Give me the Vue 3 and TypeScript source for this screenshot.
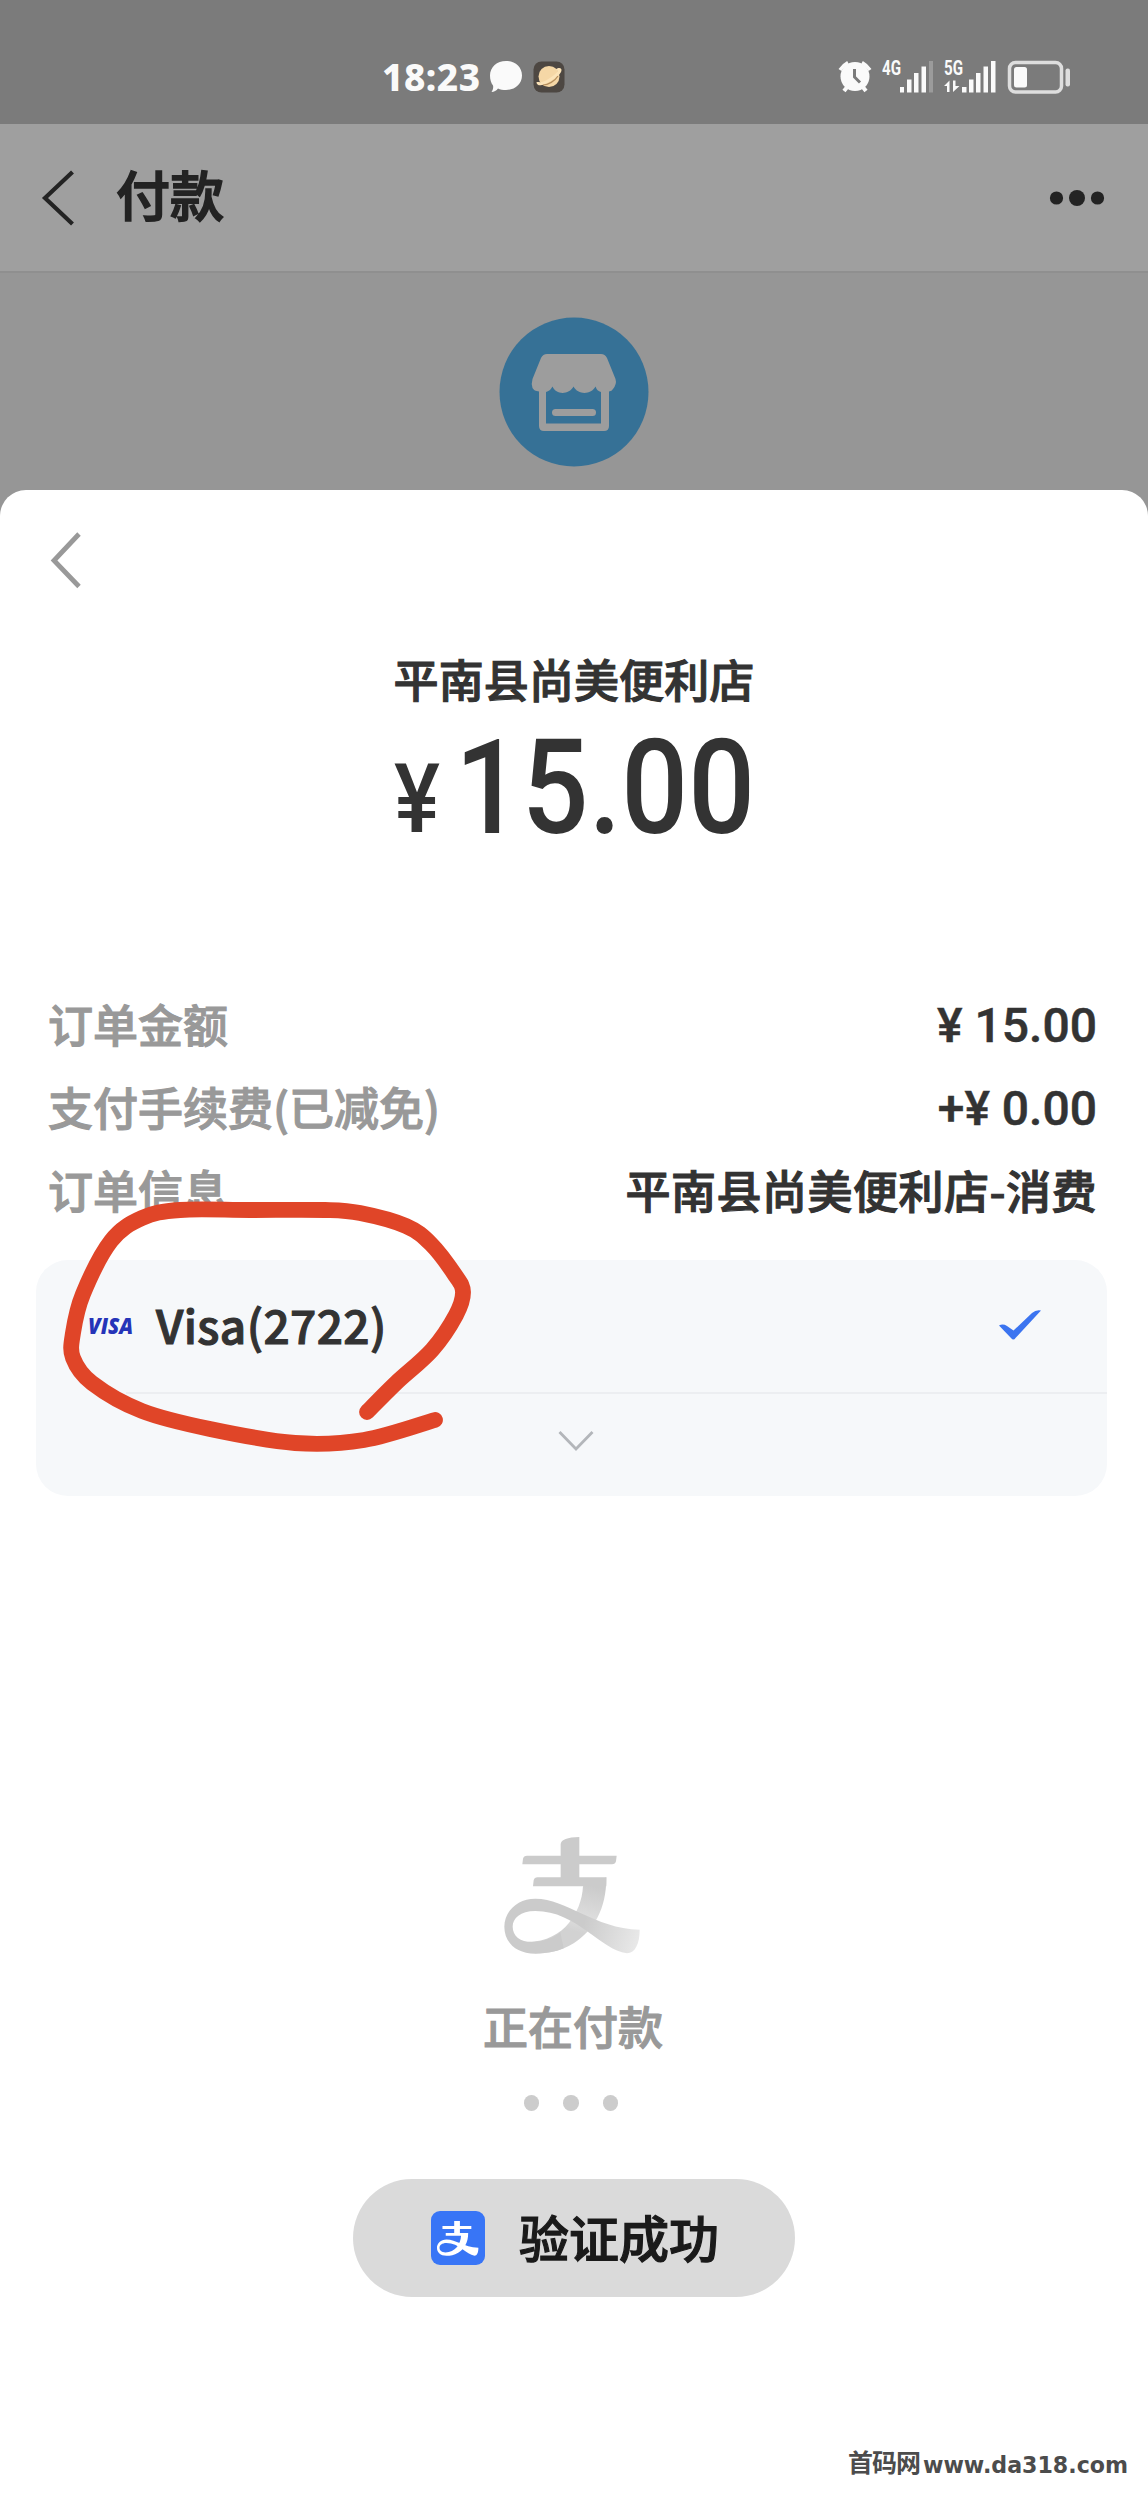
<script setup lang="ts">
interface DetailRow {
  label: string
  value: string
  numeric: boolean
}

const rows: DetailRow[] = [
  { label: '订单金额', value: '¥ 15.00', numeric: true },
  { label: '支付手续费(已减免)', value: '+¥ 0.00', numeric: true },
  { label: '订单信息', value: '平南县尚美便利店-消费', numeric: false },
]

type Point = [number, number]

// Hand-drawn marker around the selected card.
const markerPoints: Point[] = [
  [435, 1420], [364, 1440], [295, 1443], [210, 1429], [142, 1411], [92, 1383],
  [73, 1358], [73, 1333], [83, 1294], [111, 1241], [142, 1218], [180, 1210],
  [250, 1210], [325, 1210], [360, 1213], [406, 1226], [431, 1244], [455, 1275],
  [463, 1292], [456, 1315], [432, 1350], [396, 1383], [367, 1412],
]

// Catmull-Rom interpolation turned into cubic segments.
function smooth(points: Point[]): string {
  let d = `M${points[0][0]} ${points[0][1]}`
  for (let i = 0; i < points.length - 1; i++) {
    const a = points[Math.max(i - 1, 0)]
    const b = points[i]
    const c = points[i + 1]
    const e = points[Math.min(i + 2, points.length - 1)]
    d += `C${b[0] + (c[0] - a[0]) / 6} ${b[1] + (c[1] - a[1]) / 6} ${c[0] - (e[0] - b[0]) / 6} ${c[1] - (e[1] - b[1]) / 6} ${c[0]} ${c[1]}`
  }
  return d
}

const markerPath = smooth(markerPoints)
</script>

<template>
  <div class="screen">
    <header class="status">
      <div class="status-left">
        <span class="clock">18:23</span>
        <svg class="bubble" width="34" height="34" viewBox="0 0 34 34">
          <path d="M17 1C26 1 33 7 33 15.500S26 30 17 30C14 30 11 29.500 9 28.500C7.500 30.500 5 32 2.500 32C4 30 4.500 27.500 4 25.500C2 23 1 19.500 1 15.500C1 7 8 1 17 1Z" fill="#fafafa" />
        </svg>
        <svg width="32" height="32" viewBox="0 0 32 32">
          <rect x=".5" y=".5" width="31" height="31" rx="8" fill="#4d4742" />
          <circle cx="16" cy="15.500" r="10.500" fill="#f5d7a6" />
          <path d="M5 21C5 24 9 23 14 20.500C21 17 27.500 11 27 9C26.500 8 25 8.500 24 9.500" fill="none" stroke="#fbe3b8" stroke-width="3" />
          <path d="M10 24C15 24 22 20 25 15" fill="none" stroke="#b58d5c" stroke-width="1.200" />
        </svg>
      </div>
      <svg class="status-right" width="252" height="36" viewBox="838 60 252 36" fill="#fafafa">
        <path d="M840 71A22 22 0 0 1 848 63.500M870 71A22 22 0 0 0 862 63.500" fill="none" stroke="#fafafa" stroke-width="3.500" />
        <path d="M844 92L848 87M866 92L862 87" stroke="#fafafa" stroke-width="4" />
        <circle cx="855" cy="77.500" r="14.500" />
        <path d="M854.500 70V78L860 83.500" fill="none" stroke="#7b7b7b" stroke-width="3" />
        <text x="882" y="76" textLength="19" lengthAdjust="spacingAndGlyphs" class="net">4G</text>
        <path d="M900 88h4v5.500h-4zM907 80.500h4.500v13H907zM914 74h4.500v19.500H914zM921.500 67.500h4.500v26h-4.500z" />
        <path d="M929 62h4v31.500h-4z" opacity=".25" />
        <text x="944" y="76" textLength="19" lengthAdjust="spacingAndGlyphs" class="net">5G</text>
        <path d="M944 87L949.500 81.500V93H947V87zM953 81.500H955.500V87H959.500L953 93z" />
        <path d="M962 88h4.500v5.500H962zM969 80.500h4.500v13H969zM976 74h4.500v19.500H976zM983.500 67.500h4.500v26h-4.500zM991 62h4.500v31.500H991z" />
        <rect x="1009.500" y="63.500" width="52" height="29.500" rx="6" fill="none" stroke="#dedede" stroke-width="3.500" />
        <rect x="1014" y="68" width="13" height="20.500" rx="2.500" />
        <rect x="1065.500" y="69.500" width="4.500" height="18" rx="2" fill="#dedede" />
      </svg>
    </header>

    <nav class="nav">
      <svg width="34" height="56" viewBox="0 0 34 56">
        <path d="M31.500 2L4 28L31.500 54" fill="none" stroke="#232323" stroke-width="4.200" />
      </svg>
      <h1 class="nav-title">付款</h1>
      <svg class="more" width="56" height="18" viewBox="0 0 56 18" fill="#232323">
        <circle cx="7.500" cy="9" r="6.600" />
        <circle cx="28" cy="9" r="8" />
        <circle cx="48.500" cy="9" r="6.600" />
      </svg>
    </nav>

    <div class="backdrop">
      <svg width="150" height="150" viewBox="0 0 150 150">
        <circle cx="75" cy="75" r="74.500" fill="#367196" />
        <path fill="#9d9d9d" d="M48 37H102Q106 37 108 41L116.500 62Q118 67 114 72Q113 74 110 74.500V109Q110 114 105 114H45Q40 114 40 109V74.500Q35 74 33.500 71Q32 67 33.500 62L42 41Q44 37 48 37Z" />
        <path fill="#367196" d="M47 75Q51 74 53.500 69.500C57 78 70 78 74.500 69.500C79 78 92 78 96.500 69.500Q98 74 102 75V106.500H47Z" />
        <rect x="53" y="92" width="44" height="7" rx="3.500" fill="#9d9d9d" />
      </svg>
    </div>

    <main class="sheet">
      <svg class="sheet-back" width="34" height="58" viewBox="0 0 34 58">
        <path d="M30 3L5 29.500L30 55.500" fill="none" stroke="#999" stroke-width="4.800" />
      </svg>

      <h2 class="merchant">平南县尚美便利店</h2>
      <svg class="amount" width="380" height="160" viewBox="384 705 380 160">
        <text x="394" y="832" textLength="46" lengthAdjust="spacingAndGlyphs" class="yen">¥</text>
        <text x="455" y="833" textLength="300" lengthAdjust="spacingAndGlyphs" class="digits">15.00</text>
      </svg>

      <dl class="details">
        <div v-for="row in rows" :key="row.label" class="row">
          <dt>{{ row.label }}</dt>
          <dd :class="{ numeric: row.numeric }">{{ row.value }}</dd>
        </div>
      </dl>

      <section class="card">
        <div class="method">
          <svg width="50" height="36" viewBox="-1 -8 50 36">
            <text x="0" y="17.500" textLength="45" lengthAdjust="spacingAndGlyphs" class="brand">VISA</text>
          </svg>
          <span class="method-name">Visa(2722)</span>
          <svg class="check" width="44" height="32" viewBox="0 0 44 32">
            <path d="M1 16.500Q5 14.500 9 17L15.500 21.500L34 4Q38 .5 43 1.500L17.500 29Q15.500 32 13 29Z" fill="#3b74f0" />
          </svg>
        </div>
        <div class="expand">
          <svg width="36" height="22" viewBox="0 0 36 22">
            <path d="M1.500 2L18 19L34.500 2" fill="none" stroke="#b3b6ba" stroke-width="2.800" />
          </svg>
        </div>
      </section>

      <section class="progress">
        <svg width="136" height="118" viewBox="131 108 408 354">
          <defs>
            <linearGradient id="tail" gradientUnits="userSpaceOnUse" x1="370" y1="370" x2="538" y2="420">
              <stop offset="0" stop-color="#cbcbcb" />
              <stop offset="1" stop-color="#e9e9e9" />
            </linearGradient>
            <linearGradient id="leg" gradientUnits="userSpaceOnUse" x1="400" y1="260" x2="370" y2="400">
              <stop offset="0" stop-color="#cbcbcb" />
              <stop offset=".7" stop-color="#dedede" />
              <stop offset="1" stop-color="#d2d2d2" />
            </linearGradient>
          </defs>
          <path fill="url(#leg)" d="M368 259L438 232C438 330 400 390 340 430C300 455 265 460 225 460L200 426C260 426 300 400 325 370C350 340 366 300 368 259Z" />
          <path fill="#cbcbcb" d="M301 232V193H186L188 176Q190 167 200 167H301V132Q303 112 357 111V167H469L467 184Q465 193 455 193H357V232H438V259H218L220 241Q222 232 232 232Z" />
          <path fill="url(#tail)" d="M225 296C320 296 400 385 538 389C538 430 525 459 500 460C420 450 350 333 225 333C180 333 157 355 157 380C157 408 180 426 215 426C245 426 280 415 300 396L310 445C285 456 255 461 225 461C165 461 132 425 132 380C132 335 170 296 225 296Z" />
        </svg>
        <p class="progress-text">正在付款</p>
        <div class="dots"><i></i><i></i><i></i></div>
      </section>

      <div class="toast">
        <svg width="54" height="54" viewBox="0 0 54 54">
          <rect width="54" height="54" rx="9" fill="#3875f6" />
          <g transform="translate(-7.500 -1.200) scale(.102 .1)" fill="#fff">
            <path d="M301 232V193H186V162H301V112H357V162H469V193H357V232H438C438 330 400 390 340 430C300 455 265 460 225 460C165 460 132 425 132 380C132 335 170 296 225 296C320 296 390 370 538 380C538 430 525 459 500 460C420 450 350 333 225 333C180 333 157 355 157 380C157 408 180 426 215 426C310 426 366 340 368 259H218V232Z" />
          </g>
        </svg>
        <span>验证成功</span>
      </div>

      <svg class="watermark" width="284" height="44" viewBox="846 2440 284 44">
        <text x="848" y="2472" textLength="73" class="mark-cjk">首码网</text>
        <text x="923" y="2473" textLength="205" lengthAdjust="spacingAndGlyphs" class="mark-url">www.da318.com</text>
      </svg>
    </main>

    <svg class="marker" width="1148" height="2493" viewBox="0 0 1148 2493">
      <path :d="markerPath" />
    </svg>
  </div>
</template>

<style>
body {
  margin: 0;
  background: #fff;
}
</style>

<style scoped>
.screen {
  position: relative;
  width: 1148px;
  height: 2493px;
  overflow: hidden;
  display: flex;
  flex-direction: column;
  background: #969696;
  color: #333;
  font-family: "Noto Sans CJK SC", "Noto Sans", sans-serif;
}
.screen svg {
  display: block;
  flex: none;
  overflow: visible;
}
.status {
  height: 124px;
  box-sizing: border-box;
  padding: 30px 58px 0 382px;
  display: flex;
  align-items: center;
  justify-content: space-between;
  background: #7b7b7b;
}
.status-left {
  display: flex;
  align-items: center;
}
.clock {
  width: 98px;
  font: 800 37px/40px "Noto Sans", sans-serif;
  letter-spacing: 0.5px;
  color: #fafafa;
}
.bubble {
  margin: 0 10px 0 9px;
}
.net {
  font: 700 20px Roboto, sans-serif;
}
.nav {
  height: 149px;
  box-sizing: border-box;
  display: flex;
  align-items: center;
  padding: 0 43px 0 41px;
  background: #9f9f9f;
  border-bottom: 2px solid #8f8f8f;
}
.nav-title {
  margin: -7px 0 0 41px;
  font-size: 54px;
  line-height: 80px;
  font-weight: 500;
  color: #232323;
  -webkit-text-stroke: 1.6px #232323;
}
.more {
  margin-left: auto;
}
.backdrop {
  height: 217px;
  padding-top: 44px;
  box-sizing: border-box;
  display: flex;
  justify-content: center;
}
.sheet {
  flex: 1;
  display: flex;
  flex-direction: column;
  background: #fff;
  border-radius: 26px 26px 0 0;
}
.sheet-back {
  margin: 41px 0 0 49px;
}
.merchant {
  margin: 57px 0 0;
  text-align: center;
  font-size: 45px;
  line-height: 66px;
  font-weight: 500;
  letter-spacing: 0.1px;
  -webkit-text-stroke: 1.1px #333;
}
.amount {
  margin: -7px 0 0 384px;
}
.yen {
  font: 500 97px Roboto, sans-serif;
  fill: #333;
}
.digits {
  font: 500 132px Roboto, sans-serif;
  fill: #333;
}
.details {
  margin: 117px 51px 0 48px;
}
.row {
  height: 83px;
  display: flex;
  align-items: center;
  justify-content: space-between;
  font-size: 45px;
  line-height: 66px;
  font-weight: 500;
}
dt {
  color: #999;
  -webkit-text-stroke: 1.1px #999;
}
dd {
  margin: 0;
  letter-spacing: 0.5px;
  -webkit-text-stroke: 1.1px #333;
}
.numeric {
  font-family: Roboto, sans-serif;
  font-size: 48px;
  letter-spacing: 0;
  padding-top: 4px;
  -webkit-text-stroke: 0.5px #333;
}
.card {
  margin: 29px 41px 0 36px;
  height: 236px;
  border-radius: 32px;
  background: #f6f8fa;
}
.method {
  height: 132px;
  display: flex;
  align-items: center;
  padding: 0 65px 0 51px;
}
.brand {
  font: italic 800 22px "Open Sans", sans-serif;
  fill: #2534b8;
}
.method-name {
  margin: -5px 0 0 19px;
  font: 500 46px/60px "Noto Sans CJK SC", sans-serif;
  letter-spacing: 0.4px;
  -webkit-text-stroke: 1.1px #333;
}
.check {
  margin: -3px 0 0 auto;
}
.expand {
  margin-left: 90px;
  border-top: 2px solid #eceef1;
  height: 93px;
  display: flex;
  align-items: center;
}
.expand svg {
  margin-left: 432px;
}
.progress {
  margin-top: 340px;
  display: flex;
  flex-direction: column;
  align-items: center;
}
.progress > svg {
  margin-right: 5px;
}
.progress-text {
  margin: 39px 2px 0 0;
  font-size: 45px;
  line-height: 66px;
  font-weight: 500;
  color: #999;
  -webkit-text-stroke: 1.1px #999;
}
.dots {
  display: flex;
  gap: 24px;
  margin: 36px 6px 0 0;
}
.dots i {
  width: 15.500px;
  height: 15.500px;
  border-radius: 50%;
  background: #ccc;
}
.toast {
  margin: 68px 0 0 353px;
  width: 442px;
  height: 118px;
  box-sizing: border-box;
  padding-left: 78px;
  display: flex;
  align-items: center;
  gap: 34px;
  border-radius: 59px;
  background: #dadada;
  color: #1a1a1a;
  font-size: 50px;
  line-height: 70px;
  font-weight: 500;
}
.toast span {
  margin-top: -3px;
  -webkit-text-stroke: 1.2px #1a1a1a;
}
.watermark {
  margin: auto 18px 9px auto;
}
.mark-cjk {
  font: 700 25px "Noto Sans CJK SC", sans-serif;
  fill: #4c4c4c;
}
.mark-url {
  font: 700 23px "DejaVu Sans", sans-serif;
  fill: #4c4c4c;
}
.marker {
  position: absolute;
  inset: 0;
  pointer-events: none;
}
.marker path {
  fill: none;
  stroke: #e04528;
  stroke-width: 15.800;
  stroke-linecap: round;
  stroke-linejoin: round;
}
</style>
